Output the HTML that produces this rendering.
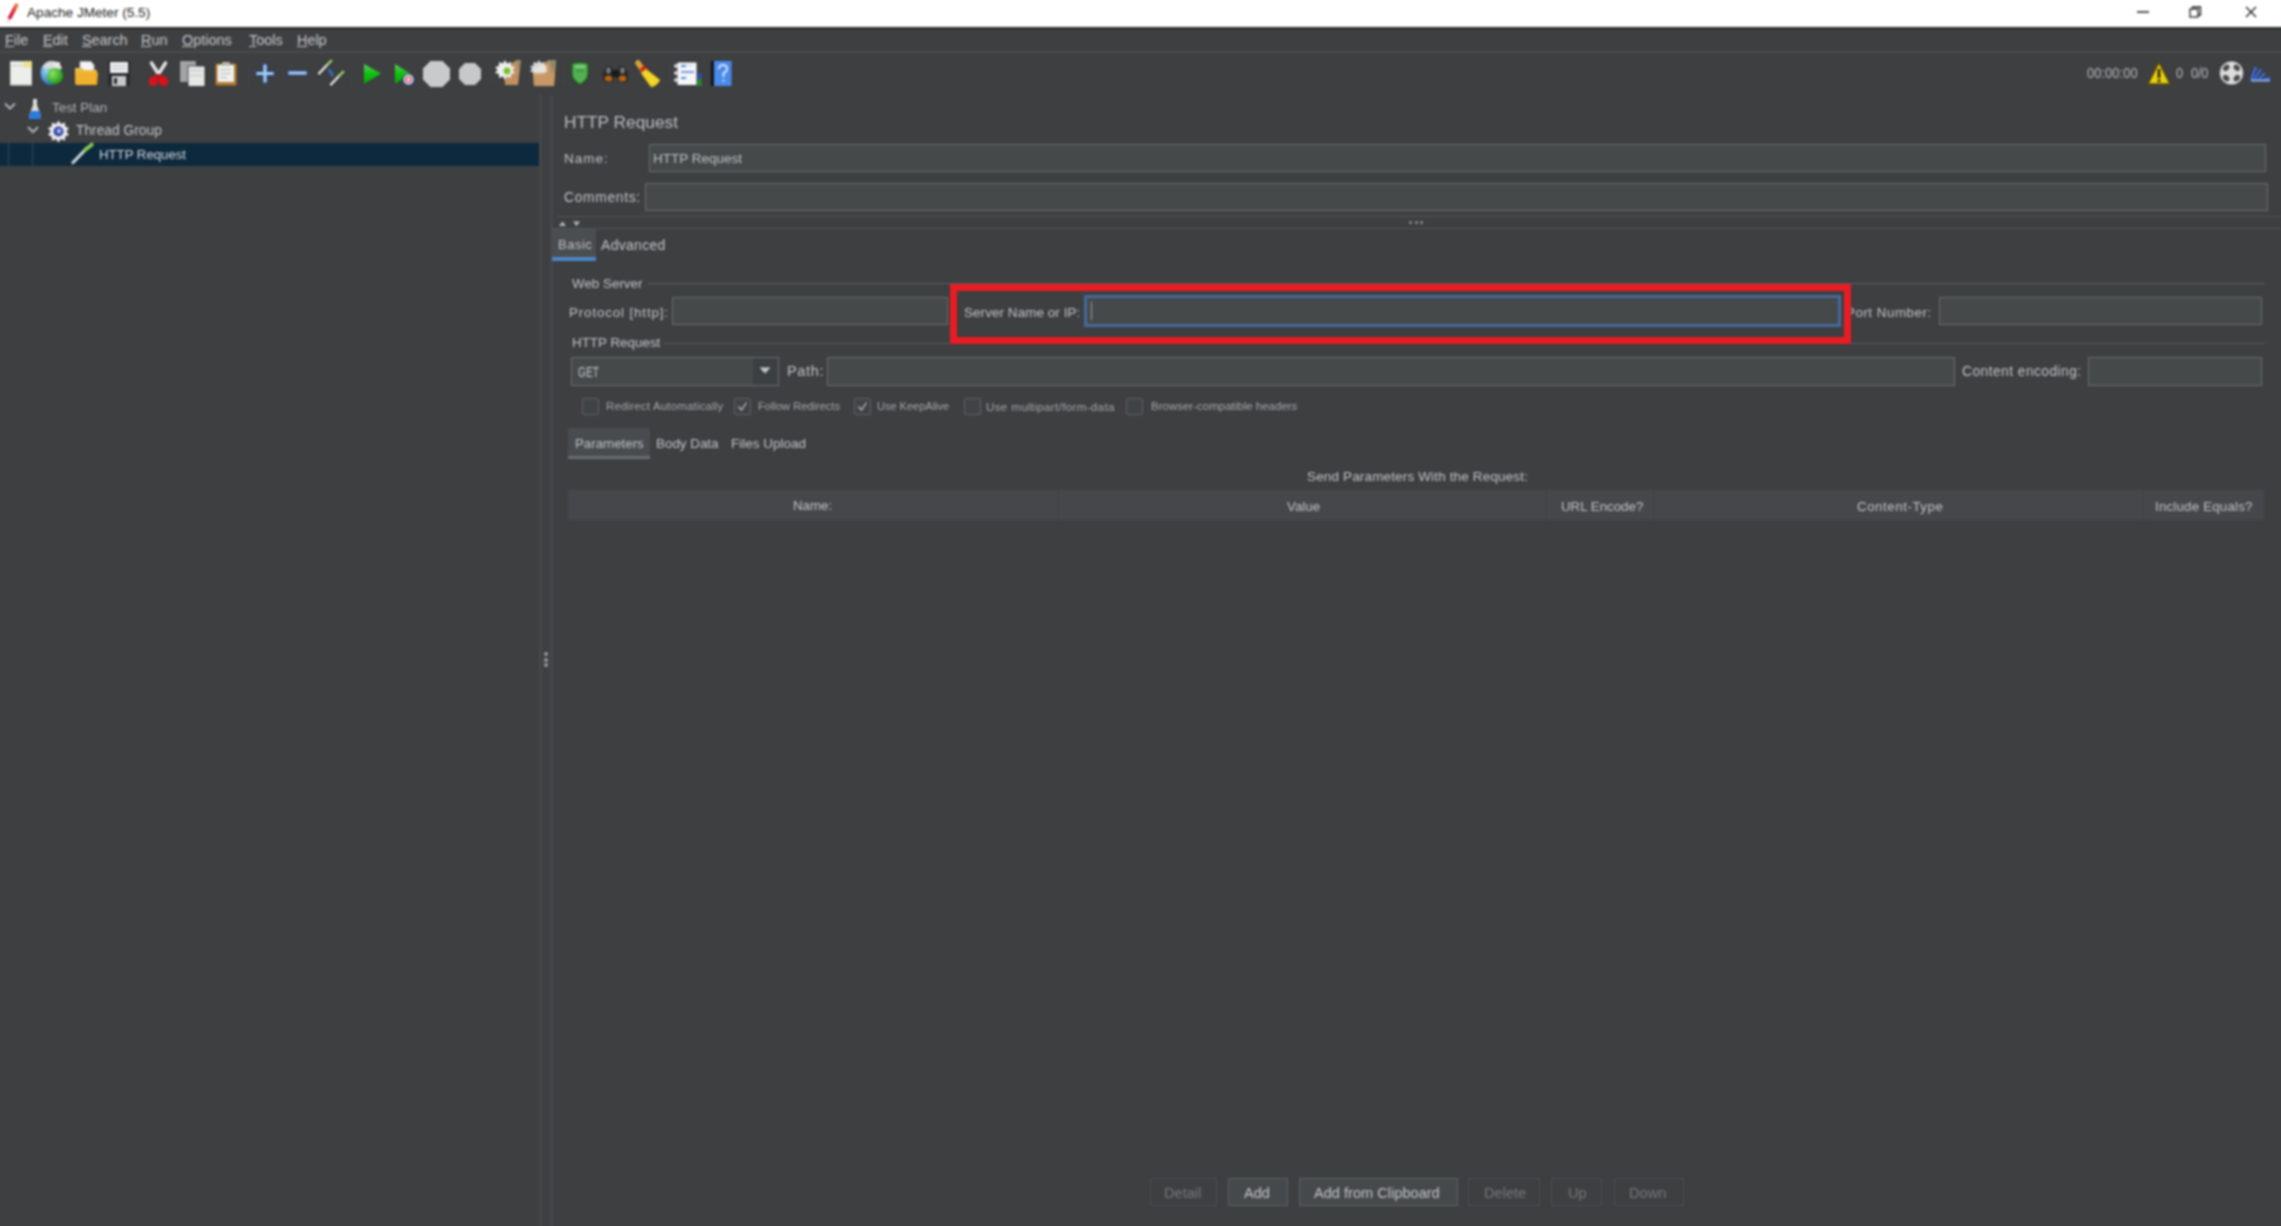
<!DOCTYPE html>
<html><head><meta charset="utf-8">
<style>
html,body{margin:0;padding:0;}
body{width:2281px;height:1226px;position:relative;overflow:hidden;background:#3e3f41;font-family:"Liberation Sans",sans-serif;color:#bbbbbb;}
.a{position:absolute;}
.t{position:absolute;white-space:nowrap;font-size:13.5px;line-height:16px;color:#c2c4c6;}
.fld{position:absolute;background:#45494a;border:1px solid #6a6d6f;box-sizing:border-box;}
svg{position:absolute;overflow:visible;}
#wrap{position:absolute;left:0;top:0;width:2281px;height:1226px;filter:blur(0.9px);}
</style></head><body><div id="wrap">
<!-- title bar -->
<div class="a" style="left:-12px;top:-12px;width:2305px;height:39px;background:#ffffff;"></div>
<div class="a" style="left:-12px;top:27px;width:2305px;height:2px;background:#2a2b2d;"></div>
<svg style="left:5px;top:1px;" width="14" height="23" viewBox="0 0 14 23">
  <defs><linearGradient id="pen" x1="0" y1="1" x2="1" y2="0"><stop offset="0" stop-color="#c81030"/><stop offset="0.55" stop-color="#e03038"/><stop offset="1" stop-color="#f4a838"/></linearGradient></defs>
  <path d="M2.5 17 L10.5 2 L14 3.5 L6 18.5 Z" fill="url(#pen)"/>
  <path d="M2.5 17 L6 18.5 L2.5 22 Z" fill="#e0c8cc"/>
</svg>
<div class="t" style="left:27px;top:5px;color:#1f1f1f;font-size:13.6px;">Apache JMeter (5.5)</div>
<!-- window controls -->
<div class="a" style="left:2137px;top:11px;width:12px;height:2px;background:#555;"></div>
<svg style="left:2189px;top:6px;" width="13" height="12" viewBox="0 0 13 12">
  <rect x="1" y="3" width="8" height="8" fill="none" stroke="#222" stroke-width="1.3"/>
  <path d="M3.5 3 V1 H11.5 V9 H9" fill="none" stroke="#222" stroke-width="1.3"/>
</svg>
<svg style="left:2245px;top:6px;" width="12" height="12" viewBox="0 0 12 12">
  <path d="M1 1 L11 11 M11 1 L1 11" stroke="#222" stroke-width="1.4"/>
</svg>
<!-- menu bar -->
<div class="a" style="left:-12px;top:29px;width:2305px;height:22px;background:#3e3f41;"></div>
<div class="a" style="left:-12px;top:51px;width:2305px;height:2px;background:#4a4c4e;"></div>
<div class="t" style="left:5px;top:31.5px;font-size:14.4px;"><u>F</u>ile</div>
<div class="t" style="left:43px;top:31.5px;font-size:14.4px;"><u>E</u>dit</div>
<div class="t" style="left:82px;top:31.5px;font-size:14.4px;"><u>S</u>earch</div>
<div class="t" style="left:141px;top:31.5px;font-size:14.4px;"><u>R</u>un</div>
<div class="t" style="left:182px;top:31.5px;font-size:14.4px;"><u>O</u>ptions</div>
<div class="t" style="left:249px;top:31.5px;font-size:14.4px;"><u>T</u>ools</div>
<div class="t" style="left:297px;top:31.5px;font-size:14.4px;"><u>H</u>elp</div>
<!-- toolbar -->
<!-- 1 new -->
<svg style="left:10px;top:61px;" width="22" height="25" viewBox="0 0 22 25">
  <rect x="0.5" y="0.5" width="21" height="23.5" fill="#eceeea" stroke="#cfd1cd" stroke-width="1"/>
  <rect x="2" y="4" width="14" height="1" fill="#c9cbc7"/>
  <path d="M14 0.5 H21.5 V7 Z" fill="#f1e27a"/>
  <rect x="14" y="0.5" width="7.5" height="6" fill="#efe08a"/>
</svg>
<!-- 2 templates globe -->
<svg style="left:40px;top:60px;" width="24" height="26" viewBox="0 0 24 26">
  <defs><radialGradient id="gb" cx="0.3" cy="0.4" r="0.7"><stop offset="0" stop-color="#9ad6ff"/><stop offset="1" stop-color="#1060b0"/></radialGradient>
  <radialGradient id="gg" cx="0.35" cy="0.35" r="0.7"><stop offset="0" stop-color="#8ee06a"/><stop offset="1" stop-color="#1a9a10"/></radialGradient></defs>
  <ellipse cx="11" cy="13" rx="10.5" ry="12" fill="url(#gb)"/>
  <path d="M2 8 Q6 0 12 1 Q20 1 22 9 L12 9 Z" fill="#d8dadc"/>
  <path d="M14 2 h6 v8 h-6z" fill="#e8e8e8"/>
  <circle cx="15" cy="16" r="8" fill="url(#gg)"/>
</svg>
<!-- 3 open folder -->
<svg style="left:74px;top:61px;" width="25" height="25" viewBox="0 0 25 25">
  <defs><linearGradient id="fo" x1="0" y1="0" x2="0" y2="1"><stop offset="0" stop-color="#f2c24a"/><stop offset="1" stop-color="#e09818"/></linearGradient></defs>
  <path d="M6 0.5 H17 L20 4 V13 H6 Z" fill="#f4f4f6" stroke="#bcbcc0" stroke-width="0.8"/>
  <path d="M1 7 H8 L10 9 H23 V23 Q23 24 22 24 H3 Q1 24 1 22 Z" fill="url(#fo)"/>
  <path d="M2 12 H24 L23 23 Q23 24 21 24 H3 Q1.5 24 1.5 22 Z" fill="#f0b030"/>
</svg>
<!-- 4 save -->
<svg style="left:108px;top:61px;" width="22" height="25" viewBox="0 0 22 25">
  <rect x="0" y="0" width="22" height="25" rx="1" fill="#2a2b2d"/>
  <rect x="2" y="1" width="18" height="11" fill="#eef0f2"/>
  <rect x="4" y="4" width="14" height="1.2" fill="#b9c0c8"/>
  <rect x="4" y="7.5" width="14" height="1.2" fill="#b9c0c8"/>
  <rect x="4" y="15" width="14" height="10" fill="#c6c8ca"/>
  <rect x="6" y="17" width="3" height="6" fill="#2a2b2d"/>
</svg>
<!-- 5 cut -->
<svg style="left:148px;top:61px;" width="21" height="26" viewBox="0 0 21 26">
  <path d="M3.5 2 L10.5 13 L17.5 2" fill="none" stroke="#e6e8e6" stroke-width="3.4" stroke-linecap="round"/>
  <ellipse cx="5.5" cy="20" rx="4.6" ry="5.4" transform="rotate(25 5.5 20)" fill="#d8121a"/>
  <ellipse cx="15.5" cy="20" rx="4.6" ry="5.4" transform="rotate(-25 15.5 20)" fill="#d8121a"/>
  <path d="M7 15 L10.5 12.5 L14 15 L12 17 L9 17 Z" fill="#c01018"/>
</svg>
<!-- 6 copy -->
<svg style="left:179px;top:60px;" width="27" height="27" viewBox="0 0 27 27">
  <rect x="0.5" y="0.5" width="17" height="22" fill="#a2a4a6" stroke="#2a2b2d" stroke-width="0.8"/>
  <rect x="9" y="6" width="17" height="20.5" fill="#e6e8e6" stroke="#2a2b2d" stroke-width="0.8"/>
  <rect x="11" y="10" width="12" height="1" fill="#c0c2c0"/>
  <rect x="11" y="15" width="12" height="1" fill="#c0c2c0"/>
</svg>
<!-- 7 paste -->
<svg style="left:215px;top:62px;" width="22" height="24" viewBox="0 0 22 24">
  <rect x="0.5" y="1.5" width="21" height="22" rx="1.5" fill="#b07a30"/>
  <rect x="2.5" y="3" width="16.5" height="17" fill="#f0f2ee"/>
  <rect x="7" y="0" width="8" height="4" rx="1" fill="#b8b8b4"/>
  <rect x="5" y="7" width="11" height="1.2" fill="#b8bcc0"/>
  <rect x="5" y="11" width="11" height="1.2" fill="#b8bcc0"/>
  <rect x="5" y="15" width="7" height="1.2" fill="#b8bcc0"/>
</svg>
<!-- separator -->
<div class="a" style="left:248px;top:60px;width:1px;height:26px;background:#424446;"></div>
<!-- 8 plus -->
<svg style="left:256px;top:64px;" width="18" height="19" viewBox="0 0 18 19">
  <path d="M9 2 V17 M2 9.5 H16" stroke="#24467a" stroke-width="5.4" stroke-linecap="square"/>
  <path d="M9 2 V17 M2 9.5 H16" stroke="#a6cbf2" stroke-width="3.2" stroke-linecap="square"/>
</svg>
<!-- 9 minus -->
<svg style="left:288px;top:69px;" width="19" height="8" viewBox="0 0 19 8">
  <path d="M2 4 H17" stroke="#24467a" stroke-width="5.4" stroke-linecap="square"/>
  <path d="M2 4 H17" stroke="#a6cbf2" stroke-width="3.2" stroke-linecap="square"/>
</svg>
<!-- 10 toggle -->
<svg style="left:317px;top:59px;" width="28" height="27" viewBox="0 0 28 27">
  <path d="M2 14.5 L13 3" stroke="#1b1b1b" stroke-width="4.4" stroke-linecap="round"/>
  <path d="M2 14.5 L10.5 5.5" stroke="#d6d8d6" stroke-width="2.8" stroke-linecap="round"/>
  <path d="M10.5 5.5 L14 2" stroke="#96c86a" stroke-width="3" stroke-linecap="round"/>
  <path d="M14 25.5 L25 14" stroke="#1b1b1b" stroke-width="4.4" stroke-linecap="round"/>
  <path d="M14 25.5 L22.5 16.5" stroke="#d6d8d6" stroke-width="2.8" stroke-linecap="round"/>
  <path d="M22.5 16.5 L26 13" stroke="#96c86a" stroke-width="3" stroke-linecap="round"/>
  <path d="M12 10 L16 17" stroke="#2f6fc0" stroke-width="2.8"/>
</svg>
<div class="a" style="left:351px;top:60px;width:1px;height:26px;background:#424446;"></div>
<!-- 11 play -->
<svg style="left:363px;top:63px;" width="19" height="22" viewBox="0 0 19 22">
  <defs><linearGradient id="pl" x1="0" y1="0" x2="0" y2="1"><stop offset="0" stop-color="#5cd05c"/><stop offset="0.5" stop-color="#10c010"/><stop offset="1" stop-color="#00a800"/></linearGradient></defs>
  <path d="M1 1 L18 10.5 L1 21 Z" fill="url(#pl)"/>
</svg>
<!-- 12 play no timers -->
<svg style="left:394px;top:63px;" width="22" height="24" viewBox="0 0 22 24">
  <path d="M1 1 L16 10.5 L1 21 Z" fill="url(#pl)"/>
  <circle cx="14.5" cy="16.5" r="5.5" fill="#e8ecf4" stroke="#2a50a0" stroke-width="1.2"/>
  <circle cx="14.5" cy="16.5" r="2.6" fill="none" stroke="#e04040" stroke-width="1.4"/>
</svg>
<!-- 13 stop -->
<svg style="left:422px;top:60px;" width="29" height="28" viewBox="0 0 29 28">
  <path d="M8.5 0.5 H20.5 L28.5 8.5 V19.5 L20.5 27.5 H8.5 L0.5 19.5 V8.5 Z" fill="#c9cacb" stroke="#2c2d2f" stroke-width="0.8"/>
</svg>
<!-- 14 shutdown -->
<svg style="left:458px;top:62px;" width="24" height="24" viewBox="0 0 24 24">
  <path d="M7 0.5 H17 L23.5 7 V17 L17 23.5 H7 L0.5 17 V7 Z" fill="#c7c8c9" stroke="#2c2d2f" stroke-width="0.8"/>
</svg>
<div class="a" style="left:490px;top:60px;width:1px;height:26px;background:#424446;"></div>
<!-- 15 clear -->
<svg style="left:495px;top:59px;" width="27" height="28" viewBox="0 0 27 28">
  <path d="M9 9 L22 1 L26 1 L23 26 L10 26 Z" fill="#c09060"/>
  <path d="M22 1 L26 1 L24 12 Z" fill="#8a8a70"/>
  <g transform="translate(10,11)">
    <path d="M0 -10 L2 -6.5 L6 -8 L6 -4 L10 -3 L7.5 0 L10 3 L6 4 L6 8 L2 6.5 L0 10 L-2 6.5 L-6 8 L-6 4 L-10 3 L-7.5 0 L-10 -3 L-6 -4 L-6 -8 L-2 -6.5 Z" fill="#efefef"/>
    <circle cx="2" cy="1" r="3.4" fill="#78c030"/>
  </g>
</svg>
<!-- 16 clear all -->
<svg style="left:529px;top:59px;" width="28" height="28" viewBox="0 0 28 28">
  <path d="M4 11 L20 1 L27 1 L25 27 L5 27 Z" fill="#c29462"/>
  <path d="M20 1 L27 1 L24 14 Z" fill="#8a8a70"/>
  <g transform="translate(10,10)">
    <path d="M0 -9 L2 -6 L5.5 -7 L5.5 -3.5 L9 -2.5 L7 0 L9 2.5 L5.5 3.5 L5.5 7 L2 6 L0 9 L-2 6 L-5.5 7 L-5.5 3.5 L-9 2.5 L-7 0 L-9 -2.5 L-5.5 -3.5 L-5.5 -7 L-2 -6 Z" fill="#eaeaea" opacity="0.9"/>
  </g>
  <path d="M4 14 L26 14 L25 27 L5 27 Z" fill="#c89866" opacity="0.85"/>
</svg>
<div class="a" style="left:563px;top:60px;width:1px;height:26px;background:#424446;"></div>
<!-- 17 function helper shield -->
<svg style="left:571px;top:62px;" width="18" height="23" viewBox="0 0 18 23">
  <path d="M1 1.5 Q9 -0.5 17 1.5 V12 Q17 18 9 22.5 Q1 18 1 12 Z" fill="#52b052" stroke="#1e5e1e" stroke-width="1.3"/>
  <rect x="4" y="3.5" width="10" height="2.2" fill="#86d486"/>
  <rect x="5" y="8" width="8" height="1.5" fill="#3a8e3a"/>
</svg>
<!-- 18 binoculars -->
<svg style="left:602px;top:65px;" width="27" height="19" viewBox="0 0 27 19">
  <path d="M4 2 Q7 0 10 2 L11.5 15 Q7 19 1.5 16 L1 9 Z" fill="#262626"/>
  <path d="M23 2 Q20 0 17 2 L15.5 15 Q20 19 25.5 16 L26 9 Z" fill="#262626"/>
  <rect x="10" y="5" width="7" height="7" fill="#1a1a1a"/>
  <ellipse cx="6.5" cy="5.5" rx="2.2" ry="3.2" fill="#7a7c7e"/><ellipse cx="20.5" cy="5.5" rx="2.2" ry="3.2" fill="#7a7c7e"/>
  <ellipse cx="6.5" cy="13.5" rx="3.8" ry="3" fill="#b86410"/><ellipse cx="20.5" cy="13.5" rx="3.8" ry="3" fill="#b86410"/>
</svg>
<!-- 19 broom -->
<svg style="left:634px;top:61px;" width="27" height="27" viewBox="0 0 27 27">
  <path d="M4 2 L9 9" stroke="#d8a838" stroke-width="5.5" stroke-linecap="round"/>
  <path d="M7 9.5 L12 6" stroke="#d42010" stroke-width="4.5"/>
  <path d="M7 12 L12 8 L26 19 Q23 25 17 26 Z" fill="#f2d628" stroke="#c09818" stroke-width="0.8"/>
</svg>
<div class="a" style="left:669px;top:60px;width:1px;height:26px;background:#424446;"></div>
<!-- 20 log list -->
<svg style="left:673px;top:61px;" width="30" height="26" viewBox="0 0 30 26">
  <rect x="24" y="12" width="4.5" height="6" fill="#3050b0"/>
  <rect x="24" y="18" width="4.5" height="7" fill="#20902a"/>
  <rect x="4" y="1" width="20" height="23.5" fill="#f4f6f8" stroke="#2a2a2c" stroke-width="0.8"/>
  <circle cx="3" cy="5" r="2" fill="#d8d8d8"/><circle cx="3" cy="12" r="2" fill="#d8d8d8"/><circle cx="3" cy="19" r="2" fill="#d8d8d8"/>
  <rect x="8" y="4" width="5" height="2" fill="#5a8ae0"/>
  <rect x="8" y="10" width="13" height="2" fill="#7a9ae0"/>
  <rect x="8" y="16" width="5" height="2" fill="#5a8ae0"/>
  <rect x="14" y="4" width="7" height="1" fill="#c8d0e0"/>
</svg>
<!-- 21 help -->
<svg style="left:711px;top:60px;" width="21" height="27" viewBox="0 0 21 27">
  <rect x="0" y="1" width="4" height="25" fill="#101418"/>
  <rect x="3" y="1" width="17.5" height="25" fill="#4a8ae8"/>
  <path d="M8 9 Q8 5 12 5 Q16 5 16 9 Q16 12 12.5 13 V17" fill="none" stroke="#cfe0ff" stroke-width="2"/>
  <rect x="11.5" y="19.5" width="2" height="2" fill="#cfe0ff"/>
</svg>

<!-- right status -->
<div class="t" style="left:2087px;top:65px;font-size:12.8px;color:#b8babc;letter-spacing:0.1px;transform:scaleY(1.15);transform-origin:0 50%;">00:00:00</div>
<svg style="left:2147px;top:61px;" width="24" height="24" viewBox="0 0 24 24">
  <path d="M12 1.5 L23 23 H1 Z" fill="#e8d010" stroke="#5a4a08" stroke-width="1.6"/>
  <rect x="10.6" y="8" width="2.8" height="9" fill="#302810"/>
  <rect x="10.6" y="18.5" width="2.8" height="2.6" fill="#302810"/>
</svg>
<div class="t" style="left:2176px;top:65px;font-size:12.8px;color:#b8babc;transform:scaleY(1.15);transform-origin:0 50%;">0</div>
<div class="t" style="left:2191px;top:65px;font-size:12.8px;color:#b8babc;letter-spacing:-0.2px;transform:scaleY(1.15);transform-origin:0 50%;">0/0</div>
<svg style="left:2219px;top:60px;" width="25" height="26" viewBox="0 0 25 26">
  <circle cx="12.5" cy="13" r="12" fill="#dcdcdc" stroke="#2a2a2a" stroke-width="0.6"/>
  <ellipse cx="7.2" cy="7.8" rx="3.6" ry="2.7" transform="rotate(-45 7.2 7.8)" fill="#4a4a4a"/>
  <ellipse cx="17.8" cy="7.8" rx="3.6" ry="2.7" transform="rotate(45 17.8 7.8)" fill="#4a4a4a"/>
  <ellipse cx="7.2" cy="18.2" rx="3.6" ry="2.7" transform="rotate(45 7.2 18.2)" fill="#4a4a4a"/>
  <ellipse cx="17.8" cy="18.2" rx="3.6" ry="2.7" transform="rotate(-45 17.8 18.2)" fill="#4a4a4a"/>
</svg>
<svg style="left:2250px;top:64px;" width="21" height="18" viewBox="0 0 21 18">
  <path d="M1 16 L6 3 M4 16 L11 5 M8 16 L15 9 M12 16 L20 14" stroke="#3a6ee8" stroke-width="2.2"/>
  <path d="M1 16.5 H20" stroke="#8ab0f0" stroke-width="2"/>
</svg>
<!-- left tree -->
<div class="a" style="left:-12px;top:143px;width:552px;height:23px;background:#0d293e;"></div>
<div class="a" style="left:8px;top:142px;width:1px;height:24px;background:#2f4a5c;"></div>
<div class="a" style="left:32px;top:143px;width:1px;height:23px;background:#2f4a5c;"></div>
<svg style="left:4px;top:102px;" width="12" height="9" viewBox="0 0 12 9">
  <path d="M1 1.5 L6 6.5 L11 1.5" fill="none" stroke="#b0b2b4" stroke-width="2"/>
</svg>
<svg style="left:27px;top:126px;" width="12" height="8" viewBox="0 0 12 8">
  <path d="M1 1 L6 6 L11 1" fill="none" stroke="#b0b2b4" stroke-width="2"/>
</svg>
<!-- flask -->
<svg style="left:28px;top:98px;" width="14" height="22" viewBox="0 0 14 22">
  <path d="M5 1 H9 V7 L13 18 Q13.5 21 11 21 H3 Q0.5 21 1 18 L5 7 Z" fill="#dcdcdc"/>
  <path d="M3 13 H11 L13 18 Q13.5 21 11 21 H3 Q0.5 21 1 18 Z" fill="#2a7ae0"/>
</svg>
<!-- gear -->
<svg style="left:47px;top:120px;" width="23" height="23" viewBox="-11.5 -11.5 23 23">
  <path d="M0 -11 L2.5 -7.5 L6.5 -9 L6.8 -5 L10.5 -3.5 L8 0 L10.5 3.5 L6.8 5 L6.5 9 L2.5 7.5 L0 11 L-2.5 7.5 L-6.5 9 L-6.8 5 L-10.5 3.5 L-8 0 L-10.5 -3.5 L-6.8 -5 L-6.5 -9 L-2.5 -7.5 Z" fill="#e8e8ec"/>
  <circle cx="0" cy="0" r="5" fill="#3848a8"/>
  <circle cx="0.5" cy="-0.5" r="2.2" fill="#a8b8f0"/>
</svg>
<!-- http pencil -->
<svg style="left:71px;top:143px;" width="23" height="21" viewBox="0 0 23 21">
  <path d="M2 19.5 L16 5" stroke="#d0d8d0" stroke-width="3.2" stroke-linecap="round"/>
  <path d="M14 7 L21 1.5" stroke="#8cc850" stroke-width="3.6" stroke-linecap="round"/>
</svg>
<div class="t" style="left:52px;top:100px;font-size:13.4px;color:#b2b4b6;">Test Plan</div>
<div class="t" style="left:76px;top:123px;font-size:13.8px;">Thread Group</div>
<div class="t" style="left:99px;top:147px;font-size:13.2px;color:#d4d8dc;">HTTP Request</div>

<!-- divider -->
<div class="a" style="left:539px;top:95px;width:3px;height:1145px;background:#454749;"></div>
<div class="a" style="left:550px;top:95px;width:3px;height:1145px;background:#454749;"></div>
<div class="a" style="left:544px;top:652px;width:4px;height:4px;border-radius:2px;background:#9a9b9c;"></div>
<div class="a" style="left:544px;top:658px;width:4px;height:4px;border-radius:2px;background:#9a9b9c;"></div>
<div class="a" style="left:544px;top:663px;width:4px;height:4px;border-radius:2px;background:#9a9b9c;"></div>
<!-- right panel top -->
<div class="t" style="left:564px;top:112px;font-size:17.3px;line-height:20px;color:#bcbec0;">HTTP Request</div>
<div class="t" style="left:564px;top:151px;letter-spacing:1.0px;">Name:</div>
<div class="fld" style="left:649px;top:144px;width:1617px;height:28px;"></div>
<div class="t" style="left:653px;top:151px;color:#bfc1c3;">HTTP Request</div>
<div class="t" style="left:564px;top:190px;font-size:13.8px;letter-spacing:0.7px;">Comments:</div>
<div class="fld" style="left:645px;top:183px;width:1623px;height:28px;"></div>
<!-- split divider -->
<div class="a" style="left:557px;top:216px;width:1724px;height:1px;background:#525456;"></div>
<div class="a" style="left:552px;top:228px;width:1729px;height:1px;background:#525456;"></div>
<svg style="left:559px;top:220px;" width="24" height="7" viewBox="0 0 24 7">
  <path d="M0 6 L3.5 1.5 L7 6 Z" fill="#b8b8b8"/>
  <path d="M14 1.5 L21 1.5 L17.5 6 Z" fill="#b8b8b8"/>
</svg>
<div class="a" style="left:1409px;top:221px;width:3px;height:3px;border-radius:2px;background:#8e8f90;"></div>
<div class="a" style="left:1415px;top:221px;width:3px;height:3px;border-radius:2px;background:#8e8f90;"></div>
<div class="a" style="left:1420px;top:221px;width:3px;height:3px;border-radius:2px;background:#8e8f90;"></div>
<!-- tabs -->
<div class="a" style="left:552px;top:229px;width:44px;height:28px;background:#4b4e50;"></div>
<div class="a" style="left:552px;top:257px;width:44px;height:4px;background:#4a88c7;"></div>
<div class="t" style="left:558px;top:237px;font-size:13px;letter-spacing:0.5px;color:#c0c2c4;">Basic</div>
<div class="t" style="left:601px;top:237px;font-size:14px;letter-spacing:0.3px;">Advanced</div>
<!-- Web Server group -->
<div class="t" style="left:572px;top:276px;font-size:13.4px;">Web Server</div>
<div class="a" style="left:647px;top:283px;width:1618px;height:1px;background:#595b5d;"></div>
<div class="t" style="left:569px;top:305px;font-size:13.4px;letter-spacing:0.85px;">Protocol [http]:</div>
<div class="fld" style="left:672px;top:297px;width:276px;height:28px;"></div>
<div class="t" style="left:964px;top:305px;font-size:13.4px;letter-spacing:0.1px;">Server Name or IP:</div>
<div class="fld" style="left:1084px;top:295px;width:757px;height:32px;border:3px solid #46699c;"></div>
<div class="a" style="left:1091px;top:302px;width:1px;height:18px;background:#9a9c9e;"></div>
<div class="t" style="left:1846px;top:305px;font-size:13.4px;letter-spacing:0.5px;">Port Number:</div>
<div class="fld" style="left:1939px;top:297px;width:323px;height:28px;"></div>
<!-- red highlight -->
<div class="a" style="left:950px;top:284px;width:901px;height:60px;border:7px solid #e81c24;box-sizing:border-box;"></div>

<!-- HTTP Request group -->
<div class="t" style="left:572px;top:335px;font-size:13.4px;">HTTP Request</div>
<div class="a" style="left:663px;top:343px;width:287px;height:1px;background:#595b5d;"></div>
<div class="a" style="left:1851px;top:343px;width:414px;height:1px;background:#595b5d;"></div>
<!-- GET combo -->
<div class="fld" style="left:571px;top:357px;width:208px;height:29px;"></div>
<div class="a" style="left:753px;top:358px;width:25px;height:27px;background:#3c3f41;"></div>
<svg style="left:759px;top:367px;" width="12" height="7" viewBox="0 0 12 7"><path d="M0.5 0.5 H11.5 L6 6.5 Z" fill="#c6c8ca"/></svg>
<div class="t" style="left:578px;top:364px;font-size:14.5px;transform:scaleX(0.7);transform-origin:0 0;">GET</div>
<div class="t" style="left:787px;top:363px;font-size:14.6px;letter-spacing:0.6px;">Path:</div>
<div class="fld" style="left:827px;top:357px;width:1128px;height:29px;"></div>
<div class="t" style="left:1962px;top:364px;font-size:13.8px;letter-spacing:0.45px;">Content encoding:</div>
<div class="fld" style="left:2088px;top:357px;width:174px;height:29px;"></div>

<!-- checkboxes -->
<div class="fld" style="left:582px;top:398px;width:17px;height:17px;background:#404345;border-color:#5e6264;border-radius:2px;"></div>
<div class="t" style="left:606px;top:400px;font-size:11.4px;letter-spacing:0.22px;line-height:13px;color:#a6a8aa;">Redirect Automatically</div>
<div class="fld" style="left:734px;top:398px;width:17px;height:17px;background:#404345;border-color:#5e6264;border-radius:2px;"></div>
<svg style="left:736px;top:400px;" width="13" height="13" viewBox="0 0 13 13"><path d="M2.5 6.5 L5.5 10 L10.5 2.5" fill="none" stroke="#c0c2c4" stroke-width="1.3"/></svg>
<div class="t" style="left:758px;top:400px;font-size:11.1px;line-height:13px;color:#a6a8aa;">Follow Redirects</div>
<div class="fld" style="left:854px;top:398px;width:17px;height:17px;background:#404345;border-color:#5e6264;border-radius:2px;"></div>
<svg style="left:856px;top:400px;" width="13" height="13" viewBox="0 0 13 13"><path d="M2.5 6.5 L5.5 10 L10.5 2.5" fill="none" stroke="#c0c2c4" stroke-width="1.3"/></svg>
<div class="t" style="left:877px;top:400px;font-size:11px;line-height:13px;color:#a6a8aa;">Use KeepAlive</div>
<div class="fld" style="left:964px;top:398px;width:17px;height:17px;background:#404345;border-color:#5e6264;border-radius:2px;"></div>
<div class="t" style="left:986px;top:400px;font-size:11.6px;letter-spacing:0.33px;line-height:13px;color:#a6a8aa;">Use multipart/form-data</div>
<div class="fld" style="left:1126px;top:398px;width:17px;height:17px;background:#404345;border-color:#5e6264;border-radius:2px;"></div>
<div class="t" style="left:1151px;top:400px;font-size:11.5px;line-height:13px;color:#a6a8aa;">Browser-compatible headers</div>

<!-- sub tabs -->
<div class="a" style="left:568px;top:428px;width:82px;height:29px;background:#494c4e;"></div>
<div class="a" style="left:568px;top:456px;width:82px;height:3px;background:#6a6d70;"></div>
<div class="t" style="left:575px;top:436px;font-size:13.3px;color:#c0c2c4;">Parameters</div>
<div class="t" style="left:656px;top:436px;font-size:13.4px;">Body Data</div>
<div class="t" style="left:731px;top:436px;font-size:13.5px;">Files Upload</div>
<!-- table -->
<div class="t" style="left:1307px;top:469px;font-size:13.5px;letter-spacing:0.15px;">Send Parameters With the Request:</div>
<div class="a" style="left:568px;top:490px;width:1696px;height:30px;background:#45474a;"></div>
<div class="a" style="left:1058px;top:490px;width:1px;height:30px;background:#404345;"></div>
<div class="a" style="left:1546px;top:490px;width:1px;height:30px;background:#404345;"></div>
<div class="a" style="left:1653px;top:490px;width:1px;height:30px;background:#404345;"></div>
<div class="a" style="left:2143px;top:490px;width:1px;height:30px;background:#404345;"></div>
<div class="t" style="left:793px;top:498px;font-size:13.3px;">Name:</div>
<div class="t" style="left:1287px;top:499px;font-size:13.3px;">Value</div>
<div class="t" style="left:1561px;top:499px;font-size:13.3px;">URL Encode?</div>
<div class="t" style="left:1857px;top:499px;font-size:13.3px;letter-spacing:0.55px;">Content-Type</div>
<div class="t" style="left:2155px;top:499px;font-size:13.3px;letter-spacing:0.2px;">Include Equals?</div>
<!-- bottom buttons -->
<div class="a" style="left:1150px;top:1178px;width:67px;height:28px;border:1px solid #4a4d4f;box-sizing:border-box;"></div>
<div class="t" style="left:1164px;top:1185px;font-size:14.6px;color:#75787a;">Detail</div>
<div class="a" style="left:1228px;top:1178px;width:60px;height:28px;border:1px solid #5e6264;background:#46494b;box-sizing:border-box;"></div>
<div class="t" style="left:1244px;top:1185px;font-size:14.6px;color:#c4c6c8;">Add</div>
<div class="a" style="left:1299px;top:1178px;width:159px;height:28px;border:1px solid #5e6264;background:#46494b;box-sizing:border-box;"></div>
<div class="t" style="left:1314px;top:1185px;font-size:14.6px;color:#c4c6c8;">Add from Clipboard</div>
<div class="a" style="left:1468px;top:1178px;width:72px;height:28px;border:1px solid #4a4d4f;box-sizing:border-box;"></div>
<div class="t" style="left:1484px;top:1185px;font-size:14.6px;color:#75787a;">Delete</div>
<div class="a" style="left:1551px;top:1178px;width:51px;height:28px;border:1px solid #4a4d4f;box-sizing:border-box;"></div>
<div class="t" style="left:1568px;top:1185px;font-size:14.6px;color:#75787a;">Up</div>
<div class="a" style="left:1614px;top:1178px;width:70px;height:28px;border:1px solid #4a4d4f;box-sizing:border-box;"></div>
<div class="t" style="left:1629px;top:1185px;font-size:14.6px;color:#75787a;">Down</div>
</div></body></html>
